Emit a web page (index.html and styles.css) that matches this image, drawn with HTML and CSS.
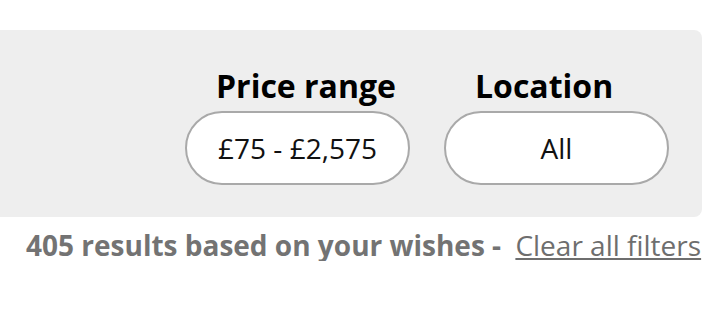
FILE: index.html
```html
<!DOCTYPE html>
<html>
<head>
<meta charset="utf-8">
<link rel="stylesheet" href="styles.css">
</head>
<body>
<div class="page">
  <section class="filters">
    <div class="filter">
      <h3 class="filter-title">Price range</h3>
      <button class="pill">£75 - £2,575</button>
    </div>
    <div class="filter">
      <h3 class="filter-title">Location</h3>
      <button class="pill">All</button>
    </div>
  </section>
  <p class="summary"><span class="count">405 results based on your wishes -</span> <a class="clear" href="#">Clear all filters</a></p>
</div>
</body>
</html>
```

FILE: styles.css
```css
* { box-sizing: border-box; }
html, body { margin: 0; padding: 0; background: #fff; }
body { font-family: "Open Sans", "Liberation Sans", sans-serif; }
.page { width: 727px; padding-top: 30px; }
.filters {
  width: 702px;
  height: 187px;
  background: #eeeeee;
  border-radius: 0 8px 8px 0;
  display: flex;
  justify-content: flex-end;
  align-items: flex-end;
  gap: 34px;
  padding: 0 33px 32px 0;
}
.filter { display: flex; flex-direction: column; }
.filter-title {
  margin: 0 0 7px 0;
  padding-left: 31px;
  font-size: 32px;
  font-weight: 700;
  line-height: 36px;
  color: #000;
}
.pill {
  width: 225px;
  height: 74px;
  border: 2px solid #a9a9a9;
  border-radius: 37px;
  background: #fff;
  font-family: inherit;
  font-size: 28px;
  color: #111;
  padding: 0;
}
.summary {
  margin: 12px 0 0 26px;
  font-size: 28px;
  line-height: 32px;
  color: #737373;
  white-space: nowrap;
}
.count { font-weight: 700; }
.clear { color: #6e6e6e; text-decoration: underline; margin-left: 7px; }
```
